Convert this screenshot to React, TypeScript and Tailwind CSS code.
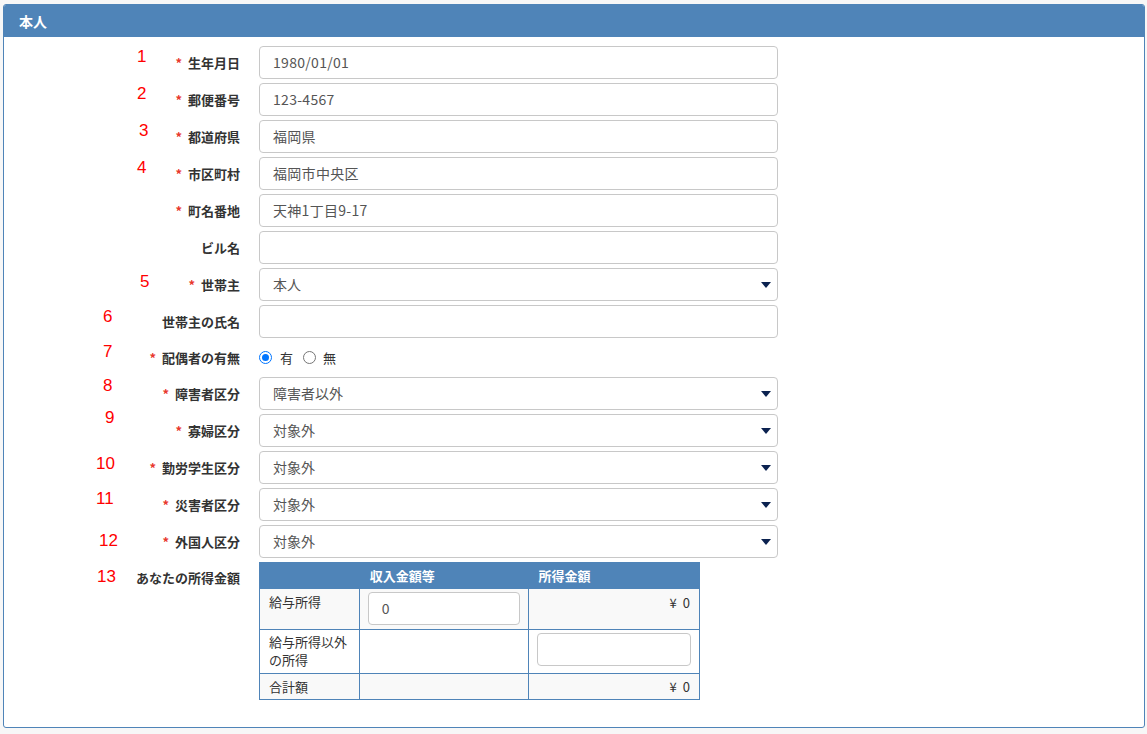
import React from "react";

const FONT = { fontFamily: '"Noto Sans CJK JP", "Noto Sans", sans-serif' };

type RowProps = {
  label: string;
  required?: boolean;
  num?: string;
  numLeft?: number;
  numTop?: number;
  children: React.ReactNode;
};

function Row({ label, required, num, numLeft = 0, numTop = 0, children }: RowProps) {
  return (
    <div className="relative flex items-center">
      {num && (
        <span
          className="absolute text-[17px] leading-[17px] text-[#ff0000]"
          style={{ left: numLeft, top: numTop, fontFamily: '"Liberation Sans", Arial, sans-serif' }}
        >
          {num}
        </span>
      )}
      <div className="w-[236px] shrink-0 text-right text-[13px] font-bold text-[#333]">
        {required && <span className="mr-[6px] text-[#e8382f]">*</span>}
        {label}
      </div>
      <div className="ml-[19px] w-[519px]">{children}</div>
    </div>
  );
}

function TextBox({ value }: { value?: string }) {
  return (
    <div className="flex h-[33px] items-center rounded-[4px] border border-[#c8c8c8] bg-white px-[13px] text-[14px] tracking-[0.3px] text-[#555]">
      {value}
    </div>
  );
}

function SelectBox({ value }: { value: string }) {
  return (
    <div className="flex h-[33px] items-center justify-between rounded-[4px] border border-[#c8c8c8] bg-white pl-[13px] pr-[6px] text-[14px] text-[#555]">
      <span>{value}</span>
      <svg width="10" height="6" viewBox="0 0 10 6">
        <path d="M0 0 L10 0 L5 6 Z" fill="#0b2250" />
      </svg>
    </div>
  );
}

function Radio({ checked }: { checked?: boolean }) {
  return checked ? (
    <span className="flex h-[13px] w-[13px] shrink-0 items-center justify-center rounded-full border-[1.5px] border-[#0075ff] bg-white">
      <span className="h-[7px] w-[7px] rounded-full bg-[#0075ff]" />
    </span>
  ) : (
    <span className="block h-[13px] w-[13px] shrink-0 rounded-full border border-[#767676] bg-white" />
  );
}

function Yen() {
  return (
    <span>
      ¥<span className="ml-[6px]">0</span>
    </span>
  );
}

export default function App() {
  return (
    <div className="min-h-screen bg-[#f7f7f7] pb-[6px] pl-[3px] pr-[2px] pt-[4px]" style={FONT}>
      <div className="overflow-hidden rounded-[3px] border border-[#4f84b8] bg-white">
        {/* header */}
        <div className="flex h-[32px] items-center bg-[#4f84b8] px-[15px] text-[14px] font-bold text-white">
          本人
        </div>

        {/* body */}
        <div className="flex flex-col gap-[4px] pb-[27px] pt-[9px]">
          <Row label="生年月日" required num="1" numLeft={133} numTop={2}>
            <TextBox value="1980/01/01" />
          </Row>
          <Row label="郵便番号" required num="2" numLeft={133} numTop={2}>
            <TextBox value="123-4567" />
          </Row>
          <Row label="都道府県" required num="3" numLeft={135} numTop={2}>
            <TextBox value="福岡県" />
          </Row>
          <Row label="市区町村" required num="4" numLeft={133} numTop={2}>
            <TextBox value="福岡市中央区" />
          </Row>
          <Row label="町名番地" required>
            <TextBox value="天神1丁目9-17" />
          </Row>
          <Row label="ビル名">
            <TextBox />
          </Row>
          <Row label="世帯主" required num="5" numLeft={136} numTop={5}>
            <SelectBox value="本人" />
          </Row>
          <Row label="世帯主の氏名" num="6" numLeft={99} numTop={3}>
            <TextBox />
          </Row>
          <Row label="配偶者の有無" required num="7" numLeft={99} numTop={1}>
            <div className="flex h-[31px] items-center text-[13px] text-[#333]">
              <Radio checked />
              <span className="ml-[8px]">有</span>
              <span className="ml-[10px]">
                <Radio />
              </span>
              <span className="ml-[7px]">無</span>
            </div>
          </Row>
          <Row label="障害者区分" required num="8" numLeft={99} numTop={0}>
            <SelectBox value="障害者以外" />
          </Row>
          <Row label="寡婦区分" required num="9" numLeft={101} numTop={-5}>
            <SelectBox value="対象外" />
          </Row>
          <Row label="勤労学生区分" required num="10" numLeft={92} numTop={4}>
            <SelectBox value="対象外" />
          </Row>
          <Row label="災害者区分" required num="11" numLeft={92} numTop={2}>
            <SelectBox value="対象外" />
          </Row>
          <Row label="外国人区分" required num="12" numLeft={95} numTop={7}>
            <SelectBox value="対象外" />
          </Row>

          {/* income table */}
          <div className="relative flex items-start">
            <span
              className="absolute text-[17px] leading-[17px] text-[#ff0000]"
              style={{ left: 93, top: 6, fontFamily: '"Liberation Sans", Arial, sans-serif' }}
            >
              13
            </span>
            <div className="w-[236px] shrink-0 pt-[6px] text-right text-[13px] font-bold text-[#333]">
              あなたの所得金額
            </div>
            <table className="ml-[19px] w-[441px] border-collapse text-[13px] text-[#333]">
              <thead>
                <tr className="h-[26px] bg-[#4f84b8] text-left font-bold text-white">
                  <th className="w-[100px] border border-[#4f84b8]" />
                  <th className="w-[170px] border border-[#4f84b8] px-[10px] font-bold">収入金額等</th>
                  <th className="w-[171px] border border-[#4f84b8] px-[9px] font-bold">所得金額</th>
                </tr>
              </thead>
              <tbody>
                <tr className="h-[41px] bg-[#f9f9f9]">
                  <td className="border border-[#4f84b8] px-[9px] pt-[3px] align-top">給与所得</td>
                  <td className="border border-[#4f84b8] px-[8px] py-[3px] align-top">
                    <div className="flex h-[33px] items-center rounded-[4px] border border-[#c8c8c8] bg-white px-[13px] text-[14px] text-[#555]">
                      0
                    </div>
                  </td>
                  <td className="border border-[#4f84b8] px-[9px] pt-[4px] text-right align-top">
                    <Yen />
                  </td>
                </tr>
                <tr className="h-[44px] bg-white">
                  <td className="border border-[#4f84b8] px-[9px] py-[3px] align-top leading-[18px]">
                    給与所得以外
                    <br />
                    の所得
                  </td>
                  <td className="border border-[#4f84b8]" />
                  <td className="border border-[#4f84b8] px-[8px] py-[3px] align-top">
                    <div className="h-[33px] rounded-[4px] border border-[#c8c8c8] bg-white" />
                  </td>
                </tr>
                <tr className="h-[26px] bg-[#f9f9f9]">
                  <td className="border border-[#4f84b8] px-[9px]">合計額</td>
                  <td className="border border-[#4f84b8]" />
                  <td className="border border-[#4f84b8] px-[9px] text-right">
                    <Yen />
                  </td>
                </tr>
              </tbody>
            </table>
          </div>
        </div>
      </div>
    </div>
  );
}
